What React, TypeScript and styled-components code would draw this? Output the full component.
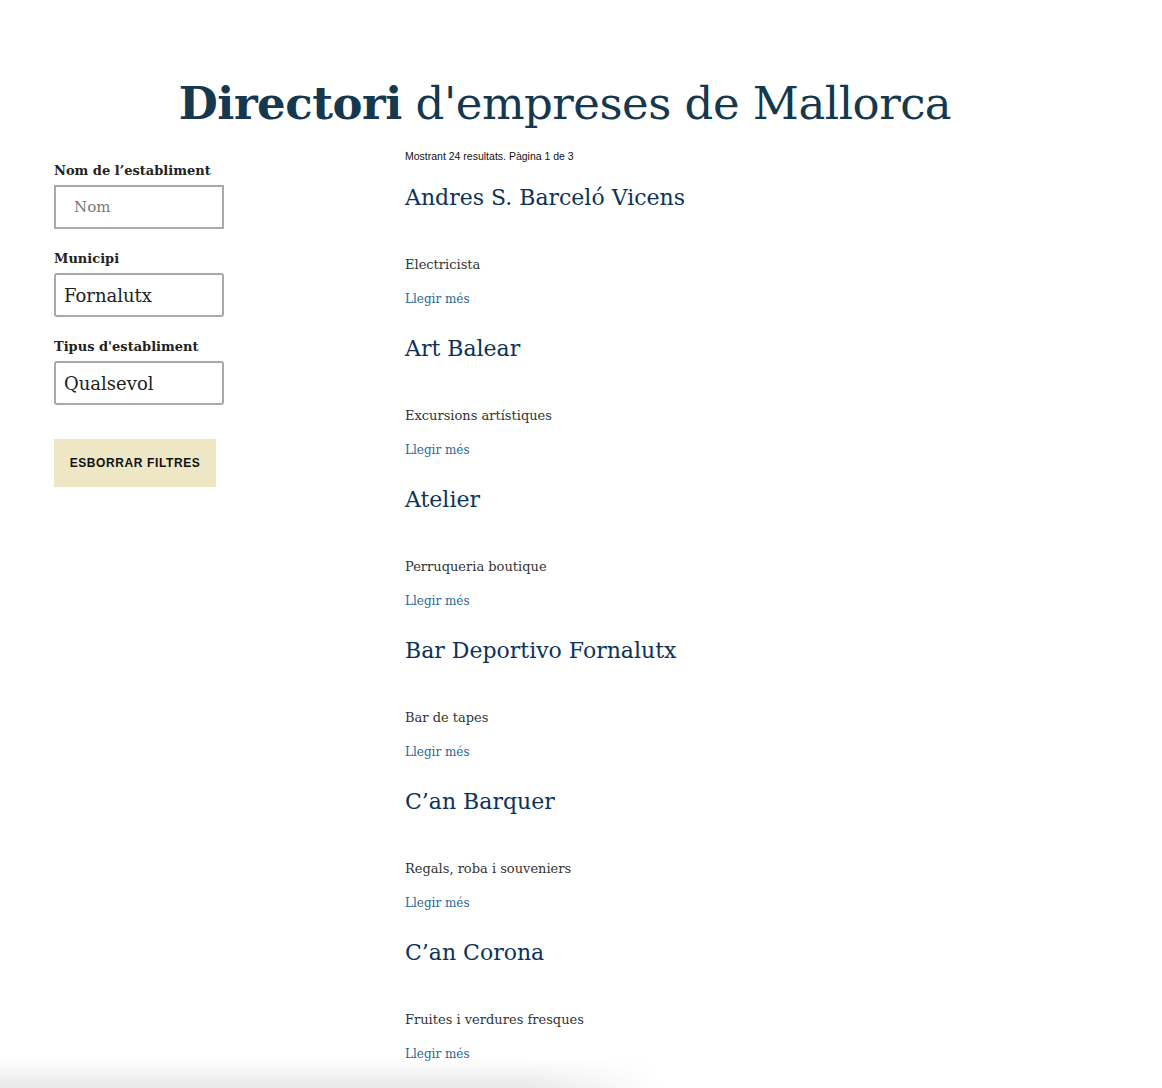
import React from 'react'
import styled, { createGlobalStyle } from 'styled-components'

const GlobalStyle = createGlobalStyle`
  html, body {
    margin: 0;
    padding: 0;
    background: #fff;
  }
  body {
    font-family: "DejaVu Serif", "Liberation Serif", serif;
    color: #333;
  }
  * { box-sizing: border-box; }
`

const Page = styled.div`
  width: 1162px;
  min-height: 1088px;
  overflow: hidden;
`

const Title = styled.h1`
  margin: 74px 0 0 0;
  padding-right: 32px;
  text-align: center;
  font-size: 45px;
  line-height: 60px;
  font-weight: 300;
  color: #15384f;
  letter-spacing: -0.5px;

  strong {
    font-weight: 700;
  }
`

const Layout = styled.div`
  display: grid;
  grid-template-columns: 351px 1fr;
  padding-left: 54px;
  margin-top: 15px;
`

const Sidebar = styled.aside`
  display: flex;
  flex-direction: column;
  padding-top: 14px;
`

const Field = styled.label`
  display: flex;
  flex-direction: column;
  gap: 6px;
  margin-bottom: 22px;
`

const FieldLabel = styled.span`
  font-size: 13px;
  line-height: 16px;
  font-weight: 700;
  color: #222;
`

const Input = styled.input<{ $filled?: boolean }>`
  width: 170px;
  height: 44px;
  border: 2px solid #a9a9a9;
  border-radius: ${p => (p.$filled ? '3px' : '0')};
  padding: 0 ${p => (p.$filled ? '8px' : '18px')};
  font-family: "DejaVu Serif", "Liberation Serif", serif;
  font-size: ${p => (p.$filled ? '18px' : '15px')};
  color: #222;
  background: #fff;
  outline: none;

  &::placeholder {
    color: #777;
  }
`

const ClearButton = styled.button`
  margin-top: 12px;
  width: 162px;
  height: 48px;
  border: none;
  background: #ede7c5;
  font-family: "Liberation Sans", Arial, sans-serif;
  font-size: 12px;
  font-weight: 700;
  letter-spacing: 0.6px;
  color: #111;
  cursor: pointer;
`

const Main = styled.main`
  display: flex;
  flex-direction: column;
`

const Summary = styled.p`
  margin: 0;
  font-family: "Liberation Sans", Arial, sans-serif;
  font-size: 10.5px;
  line-height: 14px;
  color: #111;
`

const Item = styled.article`
  display: flex;
  flex-direction: column;
  padding-top: 20px;
  padding-bottom: 5px;
`

const ItemName = styled.h2`
  margin: 0;
  font-size: 22px;
  line-height: 30px;
  font-weight: 400;
  color: #0c3359;
`

const ItemType = styled.p`
  margin: 42px 0 0 0;
  font-size: 13px;
  line-height: 20px;
  color: #333;
`

const ReadMore = styled.a`
  margin-top: 14px;
  font-size: 12px;
  line-height: 20px;
  color: #2a6796;
  text-decoration: none;
`

const BottomShade = styled.div`
  position: fixed;
  left: 0;
  bottom: 0;
  width: 660px;
  height: 30px;
  background: linear-gradient(to bottom, rgba(230, 230, 230, 0), rgba(230, 230, 230, 0.9));
  -webkit-mask-image: linear-gradient(to right, #000 80%, transparent);
  mask-image: linear-gradient(to right, #000 80%, transparent);
  pointer-events: none;
`

const items = [
  { name: 'Andres S. Barceló Vicens', type: 'Electricista' },
  { name: 'Art Balear', type: 'Excursions artístiques' },
  { name: 'Atelier', type: 'Perruqueria boutique' },
  { name: 'Bar Deportivo Fornalutx', type: 'Bar de tapes' },
  { name: 'C’an Barquer', type: 'Regals, roba i souveniers' },
  { name: 'C’an Corona', type: 'Fruites i verdures fresques' },
]

export default function App() {
  return (
    <Page>
      <GlobalStyle />
      <Title>
        <strong>Directori</strong> d'empreses de Mallorca
      </Title>
      <Layout>
        <Sidebar>
          <Field>
            <FieldLabel>Nom de l’establiment</FieldLabel>
            <Input placeholder="Nom" />
          </Field>
          <Field>
            <FieldLabel>Municipi</FieldLabel>
            <Input $filled defaultValue="Fornalutx" />
          </Field>
          <Field>
            <FieldLabel>Tipus d'establiment</FieldLabel>
            <Input $filled defaultValue="Qualsevol" />
          </Field>
          <ClearButton>ESBORRAR FILTRES</ClearButton>
        </Sidebar>
        <Main>
          <Summary>Mostrant 24 resultats. Pàgina 1 de 3</Summary>
          {items.map(item => (
            <Item key={item.name}>
              <ItemName>{item.name}</ItemName>
              <ItemType>{item.type}</ItemType>
              <ReadMore href="#">Llegir més</ReadMore>
            </Item>
          ))}
        </Main>
      </Layout>
      <BottomShade />
    </Page>
  )
}
